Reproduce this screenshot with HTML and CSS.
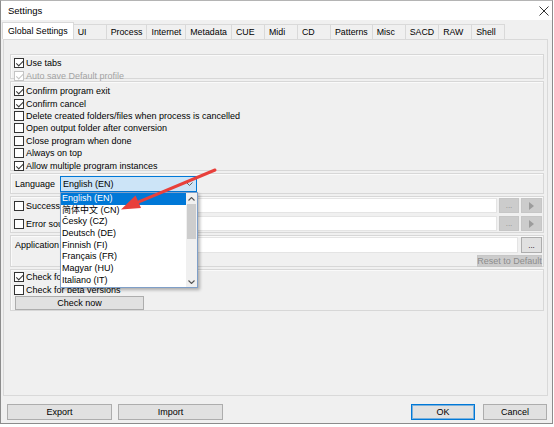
FILE: index.html
```html
<!DOCTYPE html>
<html>
<head>
<meta charset="utf-8">
<title>Settings</title>
<link rel="stylesheet" href="styles.css">
</head>
<body>
<div class="window">
  <div class="titlebar">
    <span class="title">Settings</span>
    <svg class="close" width="10" height="10" viewBox="0 0 10 10"><path d="M0.5 0.5L9.5 9.5M9.5 0.5L0.5 9.5" stroke="#333" stroke-width="1"/></svg>
  </div>
  <div class="tabs">
    <div class="tab active">Global Settings</div>
    <div class="tab">UI</div>
    <div class="tab">Process</div>
    <div class="tab">Internet</div>
    <div class="tab">Metadata</div>
    <div class="tab">CUE</div>
    <div class="tab">Midi</div>
    <div class="tab">CD</div>
    <div class="tab">Patterns</div>
    <div class="tab">Misc</div>
    <div class="tab">SACD</div>
    <div class="tab">RAW</div>
    <div class="tab">Shell</div>
  </div>
  <div class="panel">
    <div class="group g1">
      <div class="chk"><span class="box on"></span>Use tabs</div>
      <div class="chk dis"><span class="box on"></span>Auto save Default profile</div>
    </div>
    <div class="group g2">
      <div class="chk"><span class="box on"></span>Confirm program exit</div>
      <div class="chk"><span class="box on"></span>Confirm cancel</div>
      <div class="chk"><span class="box"></span>Delete created folders/files when process is cancelled</div>
      <div class="chk"><span class="box"></span>Open output folder after conversion</div>
      <div class="chk"><span class="box"></span>Close program when done</div>
      <div class="chk"><span class="box"></span>Always on top</div>
      <div class="chk"><span class="box on"></span>Allow multiple program instances</div>
    </div>
    <div class="group g3">
      <span class="lbl">Language</span>
      <div class="combo">
        <span>English (EN)</span>
        <svg class="chev" width="7" height="4" viewBox="0 0 7 4"><path d="M0.5 0.5L3.5 3.5L6.5 0.5" fill="none" stroke="#666" stroke-width="1"/></svg>
        <div class="dropdown">
          <div class="list">
            <div class="item sel">English (EN)</div>
            <div class="item">简体中文 (CN)</div>
            <div class="item">Česky (CZ)</div>
            <div class="item">Deutsch (DE)</div>
            <div class="item">Finnish (FI)</div>
            <div class="item">Français (FR)</div>
            <div class="item">Magyar (HU)</div>
            <div class="item">Italiano (IT)</div>
          </div>
          <div class="vscroll">
            <div class="arrow"><svg width="7" height="4" viewBox="0 0 7 4"><path d="M0.5 3.5L3.5 0.5L6.5 3.5" fill="none" stroke="#555" stroke-width="1.1"/></svg></div>
            <div class="thumb"></div>
            <div class="track"></div>
            <div class="arrow"><svg width="7" height="4" viewBox="0 0 7 4"><path d="M0.5 0.5L3.5 3.5L6.5 0.5" fill="none" stroke="#555" stroke-width="1.1"/></svg></div>
          </div>
        </div>
      </div>
    </div>
    <div class="group g4">
      <div class="filerow">
        <div class="chk wide"><span class="box"></span>Success sound</div>
        <div class="input"></div>
        <div class="btn dis small">...</div>
        <div class="btn dis play"><svg width="5" height="8" viewBox="0 0 5 8"><path d="M0 0L5 4L0 8Z" fill="#9c9c9c"/></svg></div>
      </div>
      <div class="filerow">
        <div class="chk wide"><span class="box"></span>Error sound</div>
        <div class="input"></div>
        <div class="btn dis small">...</div>
        <div class="btn dis play"><svg width="5" height="8" viewBox="0 0 5 8"><path d="M0 0L5 4L0 8Z" fill="#9c9c9c"/></svg></div>
      </div>
    </div>
    <div class="group g5">
      <div class="filerow">
        <span class="lbl app">Application</span>
        <div class="input"></div>
        <div class="btn browse">...</div>
      </div>
      <div class="resetrow">
        <div class="btn dis reset">Reset to Default</div>
      </div>
    </div>
    <div class="group g6">
      <div class="chk"><span class="box on"></span>Check for updates</div>
      <div class="chk"><span class="box"></span>Check for beta versions</div>
      <div class="btn checknow">Check now</div>
    </div>
  </div>
  <div class="footer">
    <div class="btn wide-btn">Export</div>
    <div class="btn wide-btn">Import</div>
    <div class="spacer"></div>
    <div class="btn ok">OK</div>
    <div class="btn cancel">Cancel</div>
  </div>
</div>
<svg class="annot" width="554" height="427" viewBox="0 0 554 427">
  <line x1="215" y1="170" x2="137" y2="202.6" stroke="#e8403b" stroke-width="3" stroke-linecap="round"/>
  <path d="M121 209.5L135.5 195.5L141 208Z" fill="#e8403b"/>
</svg>
</body>
</html>
```
FILE: styles.css
```css
* { box-sizing: border-box; }
body {
  margin: 0;
  background: #fff;
  font-family: "Liberation Sans", "Noto Sans CJK SC", sans-serif;
  font-size: 9px;
  color: #000;
  position: relative;
}
.window {
  width: 553px;
  height: 424px;
  border: 1px solid #8c8c8c;
  border-top-color: #b4b4b4;
  background: #f0f0f0;
  display: flex;
  flex-direction: column;
}
.titlebar {
  height: 19px;
  flex: none;
  background: #fff;
  display: flex;
  align-items: center;
  justify-content: space-between;
  padding: 0 3px 0 7px;
}
.title { font-size: 9.5px; }
.close { width: 10px; height: 10px; }
.tabs {
  height: 19px;
  flex: none;
  display: flex;
  align-items: flex-end;
  padding-left: 2px;
  font-size: 8.8px;
}
.tab {
  height: 15px;
  min-width: 34px;
  padding: 0 4px;
  border: 1px solid #d9d9d9;
  border-bottom: none;
  margin-left: -1px;
  display: flex;
  align-items: center;
  background: #f0f0f0;
  white-space: nowrap;
}
.tab.active {
  height: 17px;
  padding: 0 5px;
  background: #fff;
  position: relative;
  z-index: 1;
}
.panel {
  height: 357px;
  flex: none;
  margin: 0 4px 0 2px;
  border: 1px solid #d9d9d9;
  background: #f0f0f0;
  padding: 14px 3px 0 6px;
  display: flex;
  flex-direction: column;
  gap: 2px;
}
.group {
  border: 1px solid #d7d7d7;
  box-shadow: inset 1px 1px 0 #fafafa;
  padding-left: 3px;
  padding-right: 1px;
  flex: none;
}
.g1 { height: 25px; padding-top: 2px; }
.g2 { height: 90px; padding-top: 3px; }
.g3 {
  height: 21px;
  padding-top: 2px;
  display: flex;
  align-items: flex-start;
  position: relative;
  z-index: 5;
}
.g4 { height: 37px; padding-top: 1px; display: flex; flex-direction: column; gap: 3px; }
.g5 { height: 32px; padding-top: 1px; display: flex; flex-direction: column; gap: 2px; }
.g6 { height: 42px; padding-top: 1px; }

.chk {
  display: flex;
  align-items: center;
  height: 12.4px;
  white-space: nowrap;
}
.chk.dis { color: #a3a3a3; }
.box {
  width: 10px;
  height: 10px;
  border: 1px solid #333;
  background: #fff;
  margin-right: 2px;
  position: relative;
  flex: none;
}
.chk.dis .box { border-color: #c4c4c4; }
.box.on::after {
  content: "";
  position: absolute;
  left: 2.6px;
  top: 0.3px;
  width: 2.6px;
  height: 5.6px;
  border: solid #333;
  border-width: 0 1.2px 1.2px 0;
  transform: rotate(45deg);
}
.chk.dis .box.on::after { border-color: #c4c4c4; }

.lbl {
  padding-left: 1px;
  line-height: 16px;
  width: 46px;
  flex: none;
  white-space: nowrap;
}
.combo {
  position: relative;
  width: 137px;
  height: 16px;
  border: 1px solid #0078d7;
  background: #cce4f7;
  padding-left: 2px;
  display: flex;
  align-items: center;
  justify-content: space-between;
  padding-right: 3px;
}
.chev { flex: none; }
.dropdown {
  position: absolute;
  left: -1px;
  top: 15px;
  width: 138px;
  height: 96px;
  border: 1px solid #7f9fc8;
  background: #fff;
  box-shadow: 2px 2px 3px rgba(0,0,0,0.28);
  display: flex;
  z-index: 10;
}
.list { flex: 1; }
.item {
  height: 11.7px;
  line-height: 11.7px;
  padding-left: 1px;
  white-space: nowrap;
}
.item.sel { background: #0078d7; color: #fff; }
.vscroll {
  width: 11px;
  flex: none;
  background: #f0f0f0;
  display: flex;
  flex-direction: column;
}
.arrow {
  height: 11px;
  display: flex;
  align-items: center;
  justify-content: center;
  flex: none;
}
.thumb { height: 35px; background: #cdcdcd; margin: 0 1px; flex: none; }
.track { flex: 1; }

.filerow {
  display: flex;
  height: 15px;
  align-items: stretch;
}
.chk.wide { width: 120px; height: 15px; flex: none; }
.input {
  flex: 1;
  background: #fff;
  border: 1px solid #e4e4e4;
  margin-right: 2px;
}
.btn {
  background: #e1e1e1;
  border: 1px solid #adadad;
  display: flex;
  align-items: center;
  justify-content: center;
  white-space: nowrap;
  flex: none;
}
.btn.dis {
  background: #cccccc;
  border-color: #c6c6c6;
  color: #8d8d8d;
}
.btn.small { width: 20px; margin-right: 2px; font-size: 8px; }
.btn.play { width: 21px; }
.g5 .filerow { height: 16px; }
.lbl.app { width: 48px; padding-left: 1px; }
.btn.browse { width: 21px; margin-left: 1px; font-size: 8px; }
.resetrow { display: flex; justify-content: flex-end; }
.btn.reset { width: 65px; height: 12px; }
.btn.checknow { width: 129px; height: 14px; margin-left: 1px; }

.footer {
  flex: 1;
  display: flex;
  align-items: flex-start;
  padding: 8px 5px 0 6px;
  gap: 6px;
}
.btn.wide-btn { width: 105px; height: 16px; }
.spacer { flex: 1; }
.btn.ok {
  width: 64px;
  height: 16px;
  border-color: #0078d7;
  box-shadow: inset 0 0 0 1px rgba(0,120,215,0.45);
}
.btn.cancel { width: 64px; height: 16px; margin-left: 2px; }
.annot {
  position: absolute;
  left: 0;
  top: 0;
  pointer-events: none;
  z-index: 20;
}
```
